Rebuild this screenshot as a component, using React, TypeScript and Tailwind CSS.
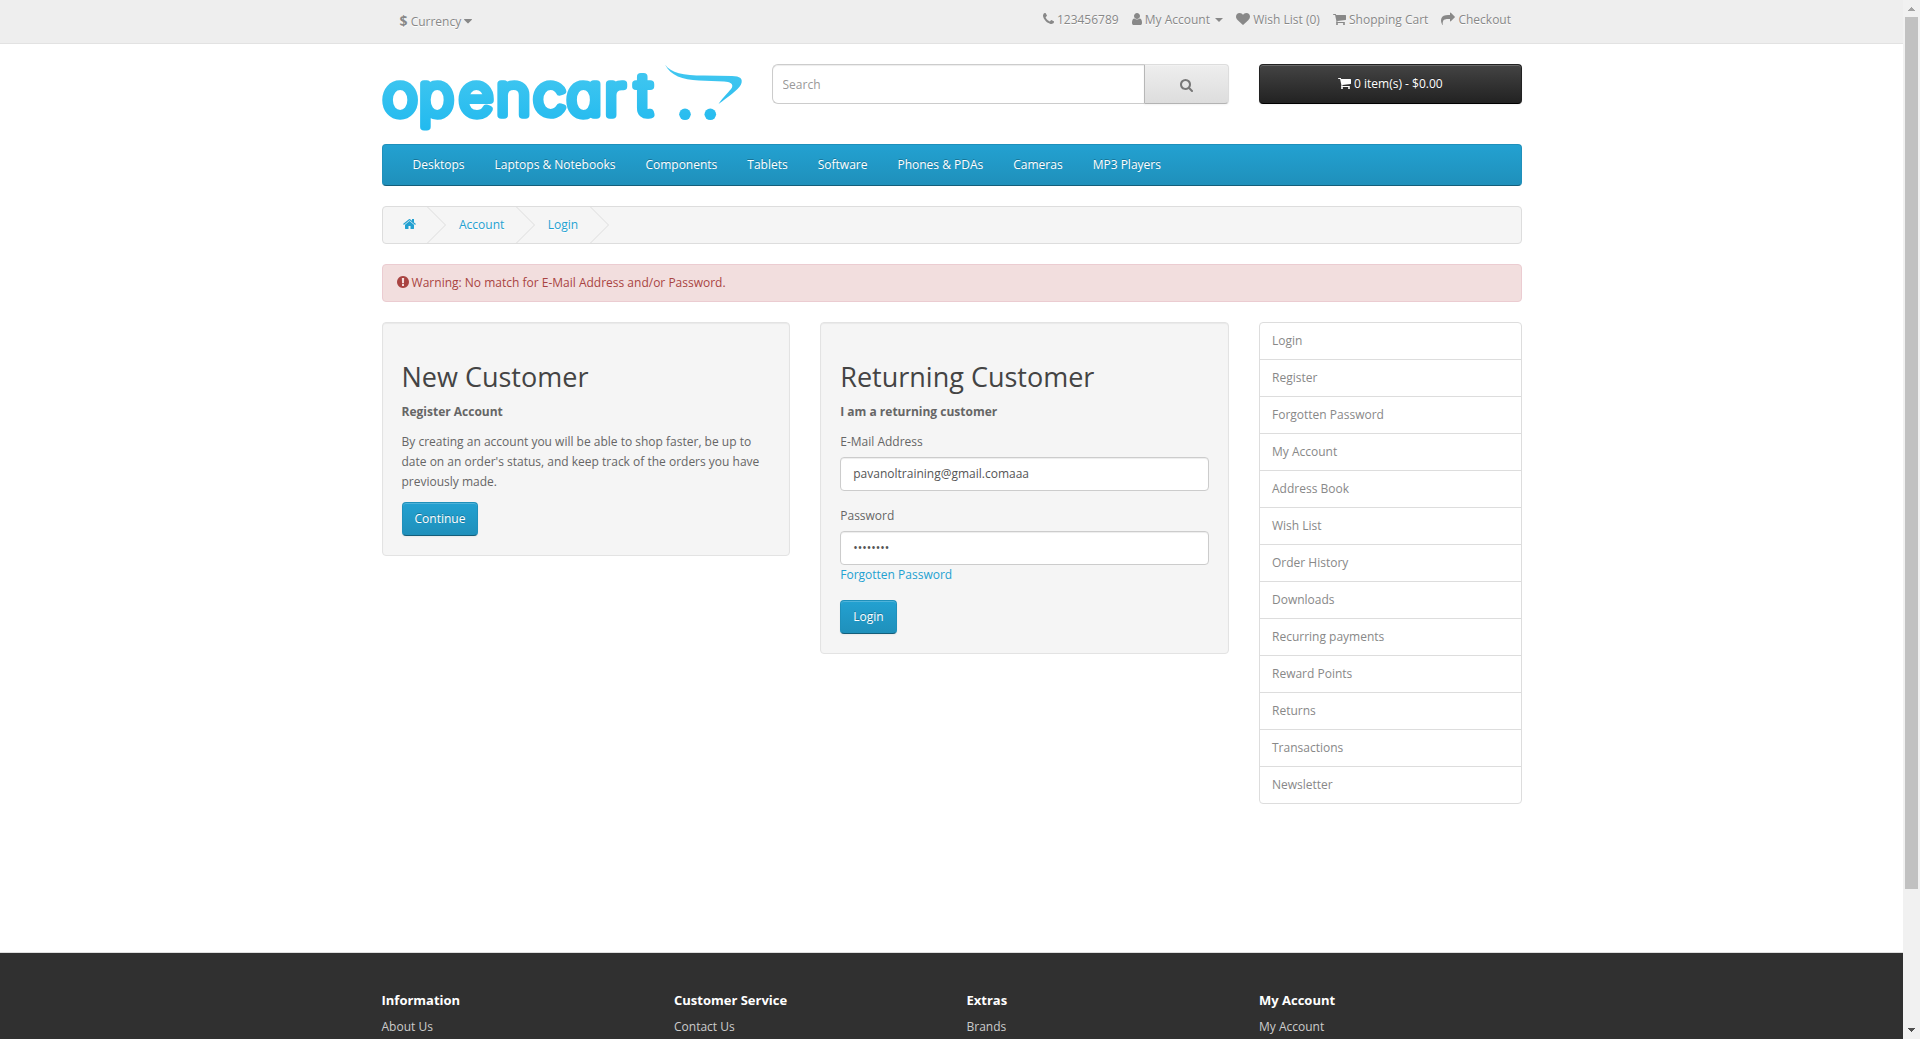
import React from 'react';

type IconName = 'phone' | 'user' | 'heart' | 'cart' | 'share' | 'search' | 'home' | 'alert' | 'caret';

// Each icon: left edge of the view box, advance width, path data.
const ICONS: Record<IconName, [number, number, string]> = {
  phone: [192, 1408, 'M1600 1240q0 27-10 70.5t-21 68.5q-21 50-122 106-94 51-186 51-27 0-53-3.5t-57.5-12.5-47-14.5-55.5-20.5-49-18q-98-35-175-83-127-79-264-216t-216-264q-48-77-83-175-3-9-18-49t-20.5-55.5-14.5-47-12.5-57.5-3.5-53q0-92 51-186 56-101 106-122 25-11 68.5-21t70.5-10q14 0 21 3 18 6 53 76 11 19 30 54t35 63.5 31 53.5q3 4 17.5 25t21.5 35.5 7 28.5q0 20-28.5 50t-62 55-62 53-28.5 46q0 9 5 22.5t8.5 20.5 14 24 11.5 19q76 137 174 235t235 174q2 1 19 11.5t24 14 20.5 8.5 22.5 5q18 0 46-28.5t53-62 55-62 50-28.5q14 0 28.5 7t35.5 21.5 25 17.5q25 15 53.5 31t63.5 35 54 30q70 35 76 53 3 7 3 21z'],
  user: [256, 1280, 'M1536 1399q0 109-62.5 187t-150.5 78h-854q-88 0-150.5-78t-62.5-187q0-85 8.5-160.5t31.5-152 58.5-131 94-89 134.5-34.5q131 128 313 128t313-128q76 0 134.5 34.5t94 89 58.5 131 31.5 152 8.5 160.5zm-256-887q0 159-112.5 271.5t-271.5 112.5-271.5-112.5-112.5-271.5 112.5-271.5 271.5-112.5 271.5 112.5 112.5 271.5z'],
  heart: [0, 1792, 'M896 1664q-26 0-44-18l-624-602q-10-8-27.5-26t-55.5-65.5-68-97.5-53.5-121-23.5-138q0-220 127-344t351-124q62 0 126.5 21.5t120 58 95.5 68.5 76 68q36-36 76-68t95.5-68.5 120-58 126.5-21.5q224 0 351 124t127 344q0 221-229 450l-623 600q-18 18-44 18z'],
  cart: [64, 1664, 'M704 1536q0 52-38 90t-90 38-90-38-38-90 38-90 90-38 90 38 38 90zm896 0q0 52-38 90t-90 38-90-38-38-90 38-90 90-38 90 38 38 90zm128-1088v512q0 24-16.5 42.5t-40.5 21.5l-1044 122q13 60 13 70 0 16-24 64h920q26 0 45 19t19 45-19 45-45 19h-1024q-26 0-45-19t-19-45q0-11 8-31.5t16-36 21.5-40 15.5-29.5l-177-823h-204q-26 0-45-19t-19-45 19-45 45-19h256q16 0 28.5 6.5t19.5 15.5 13 24.5 8 26 5.5 29.5 4.5 26h1201q26 0 45 19t19 45z'],
  share: [0, 1792, 'M1792 640q0 26-19 45l-512 512q-19 19-45 19t-45-19-19-45v-256h-224q-98 0-175.5 6t-154 21.5-133 42.5-105.5 69.5-80 101-48.5 138.5-17.5 181q0 55 5 123 0 6 2.5 23.5t2.5 26.5q0 15-8.5 25t-23.5 10q-16 0-28-17-7-9-13-22t-13.5-30-10.5-24q-127-285-127-451 0-199 53-333 162-403 875-403h224v-256q0-26 19-45t45-19 45 19l512 512q19 19 19 45z'],
  search: [64, 1664, 'M1216 832q0-185-131.5-316.5t-316.5-131.5-316.5 131.5-131.5 316.5 131.5 316.5 316.5 131.5 316.5-131.5 131.5-316.5zm512 832q0 52-38 90t-90 38q-54 0-90-38l-343-342q-179 124-399 124-143 0-273.5-55.5t-225-150-150-225-55.5-273.5 55.5-273.5 150-225 225-150 273.5-55.5 273.5 55.5 225 150 150 225 55.5 273.5q0 220-124 399l343 343q37 37 37 90z'],
  home: [64, 1664, 'M1472 992v480q0 26-19 45t-45 19h-384v-384h-256v384h-384q-26 0-45-19t-19-45v-480q0-1 .5-3t.5-3l575-474 575 474q1 2 1 6zm223-69l-62 74q-8 9-21 11h-3q-13 0-21-7l-692-577-692 577q-12 8-24 7-13-2-21-11l-62-74q-8-10-7-23.5t11-21.5l719-599q32-26 76-26t76 26l244 204v-195q0-14 9-23t23-9h192q14 0 23 9t9 23v408l219 182q10 8 11 21.5t-7 23.5z'],
  alert: [128, 1536, 'M896 128q209 0 385.5 103t279.5 279.5 103 385.5-103 385.5-279.5 279.5-385.5 103-385.5-103-279.5-279.5-103-385.5 103-385.5 279.5-279.5 385.5-103zm128 1247v-190q0-14-9-23.5t-22-9.5h-192q-13 0-23 10t-10 23v190q0 13 10 23t23 10h192q13 0 22-9.5t9-23.5zm-2-344l18-621q0-12-10-18-10-8-24-8h-220q-14 0-24 8-10 6-10 18l18 621q0 10 10 17.5t24 7.5h185q14 0 23.5-7.5t10.5-17.5z'],
  caret: [384, 1024, 'M1408 704q0 26-19 45l-448 448q-19 19-45 19t-45-19l-448-448q-19-19-19-45t19-45 45-19h896q26 0 45 19t19 45z'],
};

function Icon({ name, className = '' }: { name: IconName; className?: string }) {
  const [x, w, d] = ICONS[name];
  return (
    <svg
      viewBox={`${x} 0 ${w} 1792`}
      width={w / 128}
      height={14}
      fill="currentColor"
      className={`inline-block shrink-0 overflow-visible align-[-2px] ${className}`}
    >
      <path d={d} />
    </svg>
  );
}

function Logo() {
  return (
    <svg width="360" height="70" viewBox="0 0 360 70" className="mb-[10px] block overflow-visible">
      <defs>
        <linearGradient id="logo" gradientUnits="userSpaceOnUse" x1="0" y1="0" x2="0" y2="70">
          <stop offset="0" stopColor="#44c8f0" />
          <stop offset="1" stopColor="#20b9ef" />
        </linearGradient>
      </defs>
      <text
        x="0.6 34.7 72.6 107.5 142.7 174.3 210 239.3"
        y="51.4"
        transform="scale(1.06 1)"
        fontSize="56"
        fill="url(#logo)"
        stroke="url(#logo)"
        strokeWidth="7.5"
        strokeLinejoin="round"
        className="font-['Inter',sans-serif] font-extralight [font-feature-settings:'cv11']"
      >
        opencart
      </text>
      <path
        fill="url(#logo)"
        d="M283 .5C289 9 301 11.500 322 11.500L350 12C358 12.200 361.500 14.500 359 20.500C356 26 346 33 336.500 40C341 33 348 27 350 23.500C351.500 19.500 348 18 342 17.500L317 16.500C300 15.500 289 12 283 .5Z"
      />
      <circle cx="303" cy="50.300" r="5.800" fill="url(#logo)" />
      <circle cx="328.300" cy="50.300" r="5.800" fill="url(#logo)" />
    </svg>
  );
}

const MENU = ['Desktops', 'Laptops & Notebooks', 'Components', 'Tablets', 'Software', 'Phones & PDAs', 'Cameras', 'MP3 Players'];

const ACCOUNT = [
  'Login', 'Register', 'Forgotten Password', 'My Account', 'Address Book', 'Wish List', 'Order History',
  'Downloads', 'Recurring payments', 'Reward Points', 'Returns', 'Transactions', 'Newsletter',
];

const FOOTER = [
  ['Information', 'About Us'],
  ['Customer Service', 'Contact Us'],
  ['Extras', 'Brands'],
  ['My Account', 'My Account'],
];

function Chevron() {
  return (
    <svg width="19" height="36" viewBox="0 0 19 36" className="ml-[11.5px] mr-[13px] shrink-0" fill="none" stroke="#ddd">
      <path d="M.5 0L18.500 18L.5 36" />
    </svg>
  );
}

function PrimaryButton({ children }: { children: React.ReactNode }) {
  return (
    <button className="h-[34px] rounded border border-[#1f90bb] border-b-[#145e7a] bg-linear-to-b from-[#23a1d1] to-[#1f90bb] px-3 leading-5 text-white shadow-[inset_0_1px_0_rgba(255,255,255,0.2),0_1px_2px_rgba(0,0,0,0.05)] [text-shadow:0_-1px_0_rgba(0,0,0,0.25)]">
      {children}
    </button>
  );
}

function Well({ title, subtitle, children }: { title: string; subtitle: string; children: React.ReactNode }) {
  return (
    <section className="w-[408.75px] rounded border border-[#e3e3e3] bg-[#f5f5f5] p-[19px] shadow-[inset_0_1px_1px_rgba(0,0,0,0.05)]">
      <h2 className="mt-5 mb-[10px] text-[27px] leading-[29.7px] text-[#444]">{title}</h2>
      <p className="mb-[10px] font-bold">{subtitle}</p>
      {children}
    </section>
  );
}

const FIELD =
  'block h-[34px] w-full rounded border border-[#ccc] bg-white px-3 text-xs text-[#555] shadow-[inset_0_1px_1px_rgba(0,0,0,0.075)] outline-none';

function Scrollbar() {
  return (
    <div className="flex w-[17px] shrink-0 flex-col items-center bg-[#f1f1f1]">
      <svg width="7" height="4" className="mt-[7px]" fill="#a3a3a3" shapeRendering="crispEdges">
        <path d="M3 0h1v1h1v1h1v1h1v1h-7v-1h1v-1h1v-1h1z" />
      </svg>
      <div className="mt-[6px] h-[872px] w-[13px] bg-[#c1c1c1]" />
      <svg width="7" height="4" className="mt-auto mb-[7px]" fill="#505050" shapeRendering="crispEdges">
        <path d="M0 0h7v1h-1v1h-1v1h-1v1h-1v-1h-1v-1h-1v-1h-1z" />
      </svg>
    </div>
  );
}

export default function App() {
  return (
    <div className="flex h-[1039px] w-[1920px] overflow-hidden bg-white font-['Open_Sans',sans-serif] text-xs leading-5 text-[#666]">
      <div className="flex w-[1903px] flex-col">
        <nav className="mb-5 h-[44px] shrink-0 border-b border-[#e2e2e2] bg-[#eee] text-[#888] [text-shadow:0_1px_0_#fff]">
          <div className="mx-auto flex w-[1140px] justify-between">
            <div className="pt-[11px] pl-[18px] whitespace-nowrap">
              <strong className="text-sm leading-5">$</strong> Currency <Icon name="caret" />
            </div>
            <div className="flex gap-[13px] pt-[9.500px] pr-[10.500px] whitespace-nowrap">
              <span><Icon name="phone" /> 123456789</span>
              <span>
                <Icon name="user" /> My Account{' '}
                <span className="ml-[2px] inline-block border-x-4 border-t-4 border-x-transparent border-t-[#888] align-middle" />
              </span>
              <span><Icon name="heart" /> Wish List (0)</span>
              <span><Icon name="cart" /> Shopping Cart</span>
              <span><Icon name="share" /> Checkout</span>
            </div>
          </div>
        </nav>

        <div className="mx-auto flex w-[1140px] grow flex-col">
          <header className="flex h-20 shrink-0 items-start">
            <Logo />
            <div className="ml-[30px] flex h-10 w-[457.500px]">
              <input
                placeholder="Search"
                className="h-10 min-w-0 grow rounded-l-md border border-r-0 border-[#ccc] bg-white px-[10px] text-xs shadow-[inset_0_1px_1px_rgba(0,0,0,0.075)] outline-none placeholder:text-[#999]"
              />
              <button className="flex h-10 w-[85px] items-center justify-center rounded-r border border-[#ddd] border-b-[#b3b3b3] border-l-[#b7b7b7] bg-linear-to-b from-[#eee] to-[#ddd] text-[#777] shadow-[inset_0_1px_0_rgba(255,255,255,0.2),0_1px_2px_rgba(0,0,0,0.05)]">
                <Icon name="search" className="mt-[2px]" />
              </button>
            </div>
            <button className="ml-[30px] h-10 w-[262.500px] rounded border border-[#222] border-b-black bg-linear-to-b from-[#444] to-[#222] text-white shadow-[inset_0_1px_0_rgba(255,255,255,0.2),0_1px_2px_rgba(0,0,0,0.05)] [text-shadow:0_-1px_0_rgba(0,0,0,0.25)]">
              <Icon name="cart" /> 0 item(s) - $0.00
            </button>
          </header>

          <nav className="mb-5 flex h-[42px] shrink-0 gap-[30px] rounded border border-[#1f90bb] border-b-[#145e7a] bg-linear-to-b from-[#23a1d1] to-[#1f90bb] px-[30px] py-[10px] text-white [text-shadow:0_-1px_0_rgba(0,0,0,0.25)]">
            {MENU.map((item) => (
              <a key={item}>{item}</a>
            ))}
          </nav>

          <div className="mb-5 flex h-[38px] shrink-0 items-center rounded border border-[#ddd] bg-[#f5f5f5] pl-5 text-[#23a1d1] [text-shadow:0_1px_0_#fff]">
            <Icon name="home" className="-mt-[2px]" />
            <Chevron />
            <a>Account</a>
            <Chevron />
            <a>Login</a>
            <Chevron />
          </div>

          <div className="mb-5 h-[38px] shrink-0 rounded border border-[#ebccd1] bg-[#f2dede] px-[14px] py-2 text-[#a94442]">
            <Icon name="alert" /> Warning: No match for E-Mail Address and/or Password.
          </div>

          <main className="flex items-start gap-[30px]">
            <Well title="New Customer" subtitle="Register Account">
              <p className="mb-[10px]">
                By creating an account you will be able to shop faster, be up to date on an order's status, and keep
                track of the orders you have previously made.
              </p>
              <PrimaryButton>Continue</PrimaryButton>
            </Well>
            <Well title="Returning Customer" subtitle="I am a returning customer">
              <label className="mb-[5px] block">E-Mail Address</label>
              <input className={`${FIELD} mb-[15px]`} defaultValue="pavanoltraining@gmail.comaaa" />
              <label className="mb-[5px] block">Password</label>
              <input className={FIELD} type="password" defaultValue="password" />
              <a className="mb-[15px] block text-[#23a1d1]">Forgotten Password</a>
              <PrimaryButton>Login</PrimaryButton>
            </Well>
            <aside className="w-[262.500px] divide-y divide-[#ddd] rounded border border-[#ddd] text-[#888]">
              {ACCOUNT.map((item) => (
                <a key={item} className="block h-[37px] px-3 py-2 last:h-[36px]">{item}</a>
              ))}
            </aside>
          </main>
        </div>

        <footer className="h-[87px] shrink-0 border-t border-[#ddd] bg-[#303030] text-[#ccc]">
          <div className="mx-auto grid w-[1170px] grid-cols-4 pt-[37px]">
            {FOOTER.map(([title, link]) => (
              <div key={title} className="px-[15px]">
                <h5 className="mb-[7px] text-[13px] leading-5 font-bold text-white">{title}</h5>
                <a className="block">{link}</a>
              </div>
            ))}
          </div>
        </footer>
      </div>
      <Scrollbar />
    </div>
  );
}
